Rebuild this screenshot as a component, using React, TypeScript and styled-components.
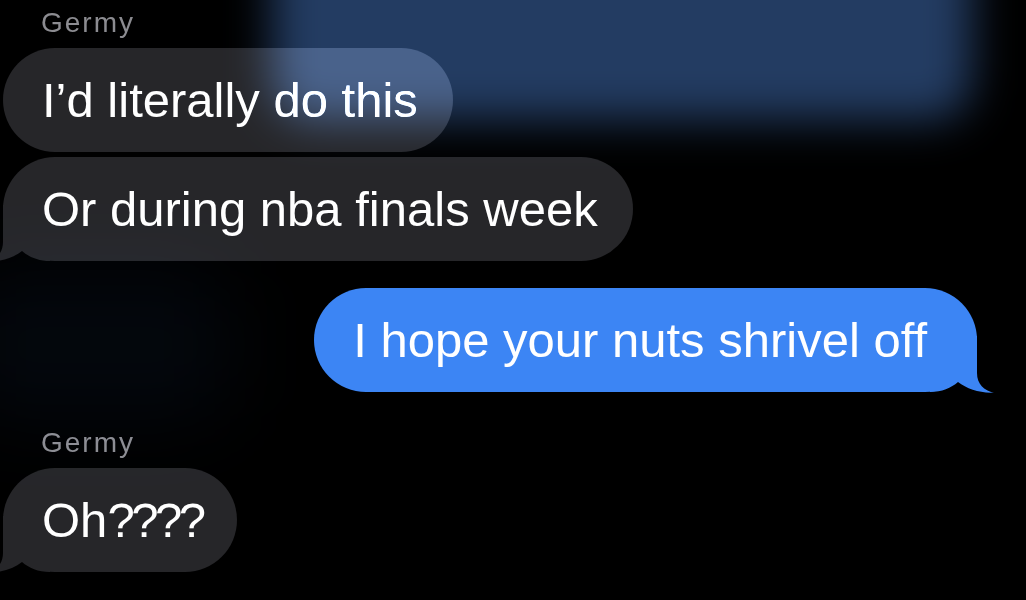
import React from "react";
import styled, { createGlobalStyle } from "styled-components";

const GlobalStyle = createGlobalStyle`
  html, body {
    margin: 0;
    padding: 0;
    background: #000;
  }
  * { box-sizing: border-box; }
`;

const Screen = styled.div`
  position: relative;
  width: 1026px;
  height: 600px;
  overflow: hidden;
  background: #000;
  isolation: isolate;
  display: flex;
  flex-direction: column;
  padding-top: 6px;
  font-family: "Liberation Sans", Arial, sans-serif;
`;

const Glow = styled.div<{ $x: number; $y: number; $w: number; $h: number; $color: string; $blur: number }>`
  position: absolute;
  left: ${(p) => p.$x}px;
  top: ${(p) => p.$y}px;
  width: ${(p) => p.$w}px;
  height: ${(p) => p.$h}px;
  background: ${(p) => p.$color};
  border-radius: 40px;
  filter: blur(${(p) => p.$blur}px);
  mix-blend-mode: plus-lighter;
  pointer-events: none;
  z-index: 3;
`;

const SenderLabel = styled.div<{ $gap: number }>`
  margin-top: ${(p) => p.$gap}px;
  padding-left: 41px;
  font-size: 28px;
  line-height: 34px;
  letter-spacing: 2px;
  color: #8c8c91;
  margin-bottom: 8px;
`;

const Group = styled.div<{ $gap?: number }>`
  display: flex;
  flex-direction: column;
  align-items: flex-start;
  gap: 5px;
  margin-top: ${(p) => p.$gap ?? 0}px;
`;

const Bubble = styled.div<{ $mine?: boolean }>`
  position: relative;
  z-index: 1;
  font-size: 49px;
  line-height: 59px;
  color: #fff;
  white-space: nowrap;
  border-radius: 52px;
  background: ${(p) => (p.$mine ? "#3c85f4" : "#262629")};
  padding: ${(p) => (p.$mine ? "23px 50px 22px 39px" : "23px 35px 22px 39px")};
  margin-left: ${(p) => (p.$mine ? 0 : 3)}px;
  margin-right: ${(p) => (p.$mine ? 49 : 0)}px;
  align-self: ${(p) => (p.$mine ? "flex-end" : "flex-start")};
`;

const Tight = styled.span`
  letter-spacing: -3.5px;
`;

const TailSvg = styled.svg<{ $mine?: boolean }>`
  position: absolute;
  bottom: 0;
  width: 70px;
  height: 56px;
  ${(p) => (p.$mine ? "right: -23px;" : "left: -23px; transform: scaleX(-1);")}
  z-index: -1;
  overflow: visible;
`;

function Tail({ mine, color }: { mine?: boolean; color: string }) {
  return (
    <TailSvg $mine={mine} viewBox="0 0 70 56">
      <path
        d="M0,0 L47,0 L47,37 C47,48 54,55 64,56.5 C51,57.5 37,53 28,46 C21,52 12,56 0,56 Z"
        fill={color}
      />
    </TailSvg>
  );
}

function Message({ text, mine, tail }: { text: React.ReactNode; mine?: boolean; tail?: boolean }) {
  return (
    <Bubble $mine={mine}>
      {text}
      {tail && <Tail mine={mine} color={mine ? "#3c85f4" : "#262629"} />}
    </Bubble>
  );
}

export default function App() {
  return (
    <>
      <GlobalStyle />
      <Screen>
        <Glow $x={272} $y={-90} $w={700} $h={210} $color="#233c62" $blur={22} />
        <Glow $x={-40} $y={270} $w={270} $h={150} $color="#03070d" $blur={40} />

        <SenderLabel $gap={0}>Germy</SenderLabel>
        <Group>
          <Message text="I’d literally do this" />
          <Message text="Or during nba finals week" tail />
        </Group>

        <Group $gap={27}>
          <Message text="I hope your nuts shrivel off" mine tail />
        </Group>

        <SenderLabel $gap={34}>Germy</SenderLabel>
        <Group>
          <Message
            text={
              <>
                Oh<Tight>????</Tight>
              </>
            }
            tail
          />
        </Group>
      </Screen>
    </>
  );
}
